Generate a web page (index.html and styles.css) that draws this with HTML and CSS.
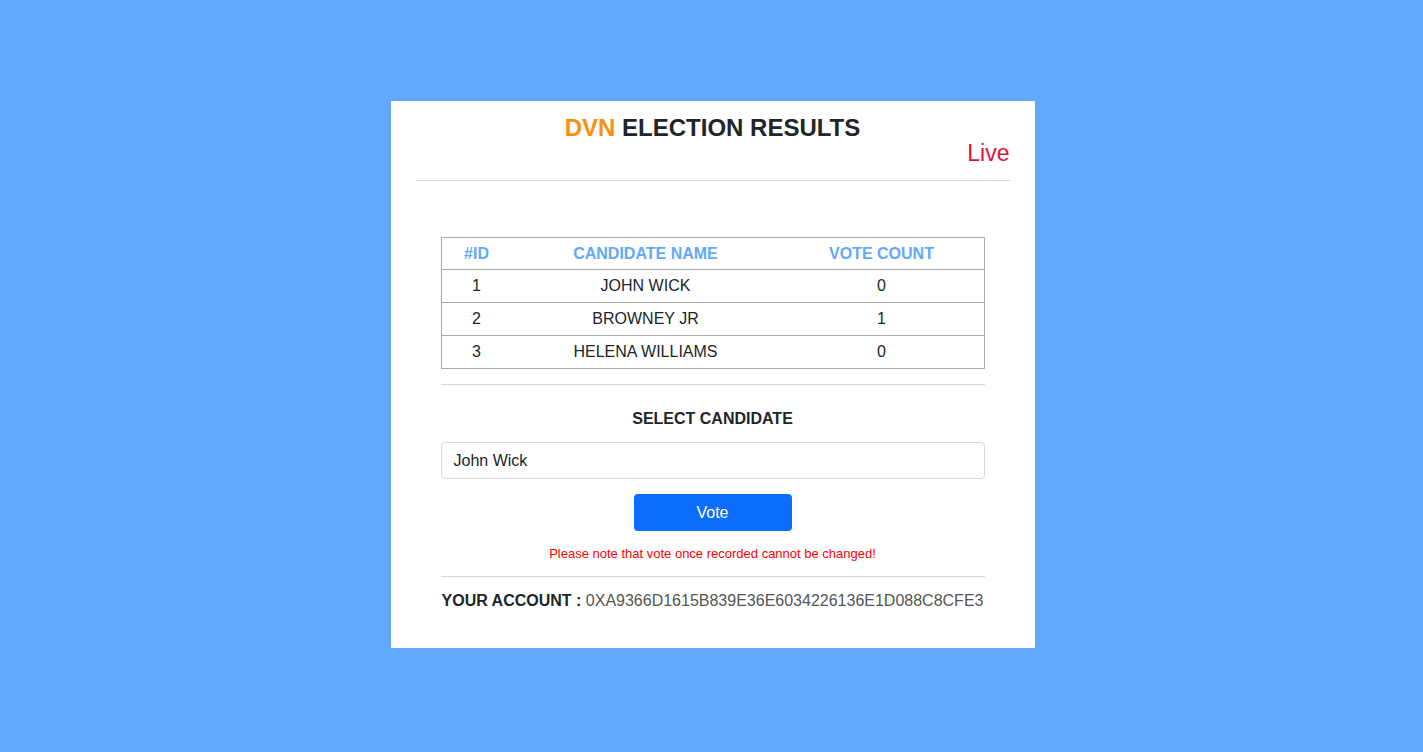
FILE: index.html
```html
<!DOCTYPE html>
<html>
<head>
<meta charset="utf-8">
<link rel="stylesheet" href="styles.css">
</head>
<body>
<div class="page">
  <div class="card">
    <div class="header">
      <h1 class="title"><span class="brand">DVN</span> ELECTION RESULTS</h1>
      <div class="live">Live</div>
    </div>
    <div class="content">
      <table class="results">
        <thead>
          <tr><th class="c-id">#ID</th><th class="c-name">CANDIDATE NAME</th><th class="c-votes">VOTE COUNT</th></tr>
        </thead>
        <tbody>
          <tr><td>1</td><td>JOHN WICK</td><td>0</td></tr>
          <tr><td>2</td><td>BROWNEY JR</td><td>1</td></tr>
          <tr><td>3</td><td>HELENA WILLIAMS</td><td>0</td></tr>
        </tbody>
      </table>
      <div class="vote-section">
        <h2 class="select-title">SELECT CANDIDATE</h2>
        <div class="select-box">John Wick</div>
        <button class="vote-btn">Vote</button>
        <p class="warning">Please note that vote once recorded cannot be changed!</p>
      </div>
      <div class="account"><span class="account-label">YOUR ACCOUNT :</span> <span class="account-id">0XA9366D1615B839E36E6034226136E1D088C8CFE3</span></div>
    </div>
  </div>
</div>
</body>
</html>
```

FILE: styles.css
```css
html, body {
  margin: 0;
  padding: 0;
}
body {
  background: #62a8fd;
  font-family: "Liberation Sans", Arial, sans-serif;
  color: #212529;
}
.page {
  height: 752px;
  display: flex;
  justify-content: center;
  padding-top: 101px;
  padding-left: 2px;
  box-sizing: border-box;
}
.card {
  width: 644px;
  height: 547px;
  background: #fff;
  padding: 0 25px;
  box-sizing: border-box;
}
.header {
  padding-top: 14px;
  padding-bottom: 15px;
  border-bottom: 1px solid #d4d4d4;
}
.title {
  margin: 0;
  font-size: 24px;
  line-height: 26px;
  font-weight: bold;
  text-align: center;
  color: #212529;
}
.brand {
  color: #f7900f;
}
.live {
  text-align: right;
  font-size: 23px;
  line-height: 24px;
  color: #dc143c;
}
.content {
  padding: 56px 25px 0;
}
.results {
  width: 100%;
  border-collapse: collapse;
  border: 1px solid #aaa;
  font-size: 16px;
}
.results th, .results td {
  height: 32px;
  padding: 0;
  text-align: center;
  border-top: 1px solid #aaa;
}
.results th {
  height: 31px;
  color: #62a8fd;
  font-weight: bold;
}
.c-id { width: 70px; }
.c-name { width: 268px; }
.vote-section {
  margin-top: 15px;
  border-top: 1px solid #d4d4d4;
  border-bottom: 1px solid #d4d4d4;
  display: flex;
  flex-direction: column;
  align-items: center;
}
.select-title {
  margin: 25px 0 0;
  font-size: 16px;
  line-height: 18px;
  font-weight: bold;
}
.select-box {
  margin-top: 14px;
  align-self: stretch;
  height: 37px;
  box-sizing: border-box;
  border: 1px solid #d8d8d8;
  border-radius: 4px;
  padding: 0 12px;
  display: flex;
  align-items: center;
  font-size: 16px;
  color: #212529;
}
.vote-btn {
  margin-top: 15px;
  width: 158px;
  height: 37px;
  border: none;
  border-radius: 4px;
  background: #0d6efd;
  color: #fff;
  font-family: "Liberation Sans", Arial, sans-serif;
  font-size: 16px;
}
.warning {
  margin: 16px 0 15px;
  font-size: 13px;
  line-height: 14px;
  color: #f00;
}
.account {
  margin-top: 15px;
  text-align: center;
  font-size: 16px;
  line-height: 18px;
}
.account-label {
  font-weight: bold;
  color: #212529;
}
.account-id {
  color: #555;
}
```
